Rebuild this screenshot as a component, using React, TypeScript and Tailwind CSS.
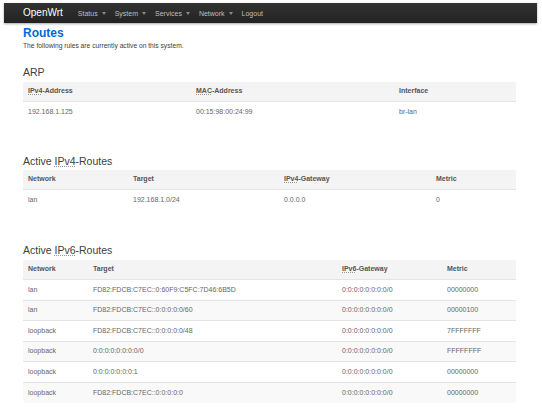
import React from "react";

type Col = { w: string; head: React.ReactNode };

const Abbr = ({ children }: { children: React.ReactNode }) => (
  <span className="underline decoration-dotted decoration-[#9a9a9a] underline-offset-[1px]">{children}</span>
);

function Table({ cols, rows }: { cols: Col[]; rows: string[][] }) {
  return (
    <div className="w-[493px] text-[7px] text-[#666]">
      <div className="flex h-[20px] items-center bg-[#f4f4f4] border-b border-[#e4e4e4] rounded-t-[2px] font-bold text-[#555]">
        {cols.map((c, i) => (
          <div key={i} className={`${c.w} pl-[5px]`}>{c.head}</div>
        ))}
      </div>
      {rows.map((r, ri) => (
        <div
          key={ri}
          className={
            ri % 2 === 1
              ? "flex h-[20.5px] items-center bg-[#f9f9f9] border-y border-[#e4e4e4] last:rounded-b-[3px] last:border-b-0"
              : "flex h-[20.5px] items-center bg-white"
          }
        >
          {r.map((cell, ci) => (
            <div key={ci} className={`${cols[ci].w} pl-[5px]`}>{cell}</div>
          ))}
        </div>
      ))}
    </div>
  );
}

const Caret = () => (
  <span className="inline-block ml-[4px] align-middle w-0 h-0 border-l-[2.5px] border-r-[2.5px] border-t-[3px] border-l-transparent border-r-transparent border-t-[#8a8a8a]" />
);

export default function App() {
  return (
    <div className="w-[542px] h-[412px] overflow-hidden bg-white font-['Liberation_Sans',Arial,sans-serif] text-[#404040]">
      <div className="pt-[3px] pl-[4px] pr-[5px]">
        <nav className="h-[20px] flex items-center bg-gradient-to-b from-[#333333] to-[#222222] shadow-[0_1px_2px_rgba(0,0,0,0.35)] pl-[19px]">
          <span className="text-white text-[10px] leading-none mr-[15px]">OpenWrt</span>
          <div className="flex items-center gap-[9px] text-[7px] text-[#bfbfbf] leading-none">
            <span>Status<Caret /></span>
            <span>System<Caret /></span>
            <span>Services<Caret /></span>
            <span>Network<Caret /></span>
            <span>Logout</span>
          </div>
        </nav>
      </div>
      <div className="px-[23px]">
        <h1 className="mt-[3.5px] h-[12px] leading-[12px] text-[12px] font-bold text-[#0069d6]">Routes</h1>
        <p className="mt-[3.5px] h-[8px] leading-[8px] text-[6.7px] text-[#404040]">
          The following rules are currently active on this system.
        </p>

        <h2 className="mt-[16px] h-[12px] leading-[12px] text-[10.5px]">ARP</h2>
        <div className="mt-[3.5px]">
          <Table
            cols={[
              { w: "w-[168px]", head: <><Abbr>IPv4</Abbr>-Address</> },
              { w: "w-[203px]", head: <><Abbr>MAC</Abbr>-Address</> },
              { w: "w-[122px]", head: "Interface" },
            ]}
            rows={[["192.168.1.125", "00:15:98:00:24:99", "br-lan"]]}
          />
        </div>

        <h2 className="mt-[33px] h-[12px] leading-[12px] text-[10.5px]">
          Active <Abbr>IPv4</Abbr>-Routes
        </h2>
        <div className="mt-[2.5px]">
          <Table
            cols={[
              { w: "w-[105px]", head: "Network" },
              { w: "w-[151px]", head: "Target" },
              { w: "w-[152px]", head: <><Abbr>IPv4</Abbr>-Gateway</> },
              { w: "w-[85px]", head: "Metric" },
            ]}
            rows={[["lan", "192.168.1.0/24", "0.0.0.0", "0"]]}
          />
        </div>

        <h2 className="mt-[33.5px] h-[12px] leading-[12px] text-[10.5px]">
          Active <Abbr>IPv6</Abbr>-Routes
        </h2>
        <div className="mt-[4px]">
          <Table
            cols={[
              { w: "w-[65px]", head: "Network" },
              { w: "w-[249px]", head: "Target" },
              { w: "w-[105px]", head: <><Abbr>IPv6</Abbr>-Gateway</> },
              { w: "w-[74px]", head: "Metric" },
            ]}
            rows={[
              ["lan", "FD82:FDCB:C7EC::0:60F9:C5FC:7D46:6B5D", "0:0:0:0:0:0:0:0/0", "00000000"],
              ["lan", "FD82:FDCB:C7EC::0:0:0:0:0/60", "0:0:0:0:0:0:0:0/0", "00000100"],
              ["loopback", "FD82:FDCB:C7EC::0:0:0:0:0/48", "0:0:0:0:0:0:0:0/0", "7FFFFFFF"],
              ["loopback", "0:0:0:0:0:0:0:0/0", "0:0:0:0:0:0:0:0/0", "FFFFFFFF"],
              ["loopback", "0:0:0:0:0:0:0:1", "0:0:0:0:0:0:0:0/0", "00000000"],
              ["loopback", "FD82:FDCB:C7EC::0:0:0:0:0", "0:0:0:0:0:0:0:0/0", "00000000"],
            ]}
          />
        </div>
      </div>
    </div>
  );
}
